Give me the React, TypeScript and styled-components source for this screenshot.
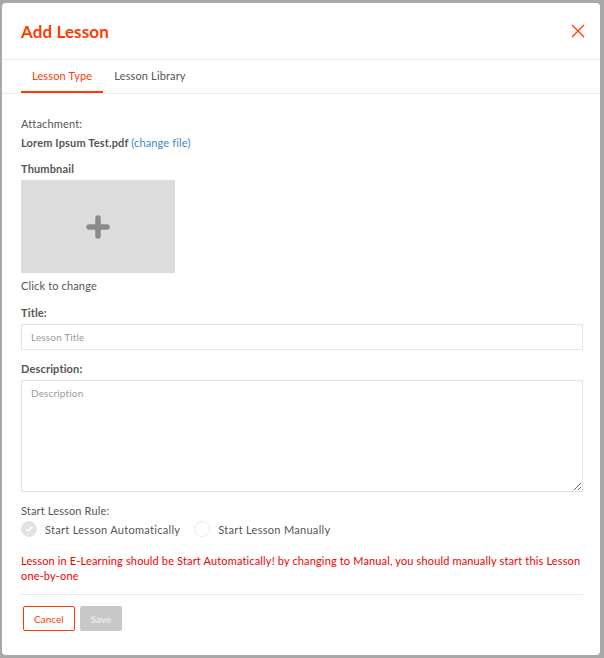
import styled, { createGlobalStyle } from "styled-components";

const Global = createGlobalStyle`
  html, body {
    margin: 0;
    padding: 0;
    background: #a9a9a9;
  }
  body {
    font-family: Lato, "Noto Sans", sans-serif;
  }
`;

const Overlay = styled.div`
  width: 604px;
  height: 658px;
  display: flex;
  padding: 3px 4px 3px 2px;
  box-sizing: border-box;
  background: #a9a9a9;
`;

const Modal = styled.div`
  flex: 1;
  background: #fff;
  border-radius: 4px;
  display: flex;
  flex-direction: column;
  letter-spacing: 0.15px;
`;

const Header = styled.div`
  height: 56px;
  display: flex;
  align-items: center;
  justify-content: space-between;
  padding: 0 13px 0 19px;
  border-bottom: 1px solid #ececec;
`;

const Title = styled.h1`
  margin: 0;
  font-size: 17px;
  font-weight: 700;
  color: #ff3a00;
  letter-spacing: 0.1px;
`;

const Close = styled.button`
  border: 0;
  background: none;
  padding: 0;
  width: 18px;
  height: 18px;
  display: flex;
  cursor: pointer;
`;

const Tabs = styled.div`
  display: flex;
  padding: 0 19px;
  border-bottom: 1px solid #ececec;
`;

const Tab = styled.div<{ $active?: boolean }>`
  height: 33px;
  box-sizing: border-box;
  padding: 0 11px;
  display: flex;
  align-items: center;
  font-size: 11px;
  color: ${(p) => (p.$active ? "#ff3a00" : "#555")};
  border-bottom: 2px solid ${(p) => (p.$active ? "#ff3a00" : "transparent")};
`;

const Body = styled.div`
  padding: 22px 17px 0 19px;
  display: flex;
  flex-direction: column;
`;

const Label = styled.div<{ $bold?: boolean; $gap?: number }>`
  font-size: 11px;
  line-height: 15px;
  color: #555;
  font-weight: ${(p) => (p.$bold ? 700 : 400)};
  margin-top: ${(p) => p.$gap ?? 0}px;
`;

const Link = styled.a`
  color: #3d86c6;
  font-weight: 400;
  text-decoration: none;
`;

const Thumb = styled.div`
  margin-top: 4px;
  width: 154px;
  height: 93px;
  background: #dcdcdc;
  display: flex;
  align-items: center;
  justify-content: center;
`;

const Input = styled.input`
  margin-top: 4px;
  height: 26px;
  box-sizing: border-box;
  border: 1px solid #e5e5e5;
  padding: 0 9px;
  font-family: inherit;
  font-size: 10px;
  letter-spacing: 0.15px;
  outline: none;
  &::placeholder { color: #9a9a9a; }
`;

const Area = styled.textarea`
  margin-top: 4px;
  height: 112px;
  box-sizing: border-box;
  border: 1px solid #e5e5e5;
  padding: 6px 9px;
  font-family: inherit;
  font-size: 10px;
  letter-spacing: 0.15px;
  outline: none;
  resize: vertical;
  &::placeholder { color: #9a9a9a; }
`;

const Radios = styled.div`
  margin-top: 2px;
  display: flex;
  align-items: center;
  height: 18px;
`;

const Option = styled.label`
  display: flex;
  align-items: center;
  gap: 8px;
  margin-right: 14px;
  font-size: 11px;
  letter-spacing: 0.3px;
  color: #555;
`;

const Dot = styled.span<{ $checked?: boolean }>`
  width: 16px;
  height: 16px;
  border-radius: 50%;
  box-sizing: border-box;
  background: ${(p) => (p.$checked ? "#e3e3e3" : "#fff")};
  border: 1px solid ${(p) => (p.$checked ? "#e3e3e3" : "#ebebeb")};
  display: flex;
  align-items: center;
  justify-content: center;
`;

const Warning = styled.p`
  margin: 15px 0 0;
  font-size: 11px;
  line-height: 15px;
  color: #f20000;
`;

const Divider = styled.hr`
  margin: 11px 0 0;
  border: 0;
  border-top: 1px solid #e8e8e8;
`;

const Actions = styled.div`
  margin-top: 11px;
  padding-left: 2px;
  display: flex;
  gap: 5px;
`;

const Button = styled.button<{ $primary?: boolean }>`
  height: 25px;
  padding: 0 10px;
  font-family: inherit;
  font-size: 10px;
  border-radius: 2px;
  border: 1px solid ${(p) => (p.$primary ? "#c8c8c8" : "#ff3a00")};
  background: ${(p) => (p.$primary ? "#c8c8c8" : "#fff")};
  color: ${(p) => (p.$primary ? "#eaeaea" : "#ff3a00")};
  font-weight: ${(p) => (p.$primary ? 700 : 400)};
`;

export default function App() {
  return (
    <>
      <Global />
      <Overlay>
        <Modal>
          <Header>
            <Title>Add Lesson</Title>
            <Close aria-label="close">
              <svg width="18" height="18" viewBox="0 0 18 18">
                <path d="M3 3 L15 15 M15 3 L3 15" stroke="#ff3a00" strokeWidth="1.3" />
              </svg>
            </Close>
          </Header>
          <Tabs>
            <Tab $active>Lesson Type</Tab>
            <Tab>Lesson Library</Tab>
          </Tabs>
          <Body>
            <Label>Attachment:</Label>
            <Label $bold $gap={4}>
              Lorem Ipsum Test.pdf <Link href="#">(change file)</Link>
            </Label>
            <Label $bold $gap={11}>Thumbnail</Label>
            <Thumb>
              <svg width="24" height="24" viewBox="0 0 24 24">
                <path d="M12 3 V21 M3 12 H21" stroke="#8a8a8a" strokeWidth="5.5" strokeLinecap="round" />
              </svg>
            </Thumb>
            <Label $gap={5}>Click to change</Label>
            <Label $bold $gap={12}>Title:</Label>
            <Input placeholder="Lesson Title" />
            <Label $bold $gap={11}>Description:</Label>
            <Area placeholder="Description" />
            <Label $gap={11}>Start Lesson Rule:</Label>
            <Radios>
              <Option>
                <Dot $checked>
                  <svg width="8" height="8" viewBox="0 0 8 8">
                    <path d="M1 4 L3.2 6 L7 2" stroke="#fff" strokeWidth="1.4" fill="none" />
                  </svg>
                </Dot>
                Start Lesson Automatically
              </Option>
              <Option>
                <Dot />
                Start Lesson Manually
              </Option>
            </Radios>
            <Warning>
              Lesson in E-Learning should be Start Automatically! by changing to Manual, you should manually start this Lesson one-by-one
            </Warning>
            <Divider />
            <Actions>
              <Button>Cancel</Button>
              <Button $primary>Save</Button>
            </Actions>
          </Body>
        </Modal>
      </Overlay>
    </>
  );
}
